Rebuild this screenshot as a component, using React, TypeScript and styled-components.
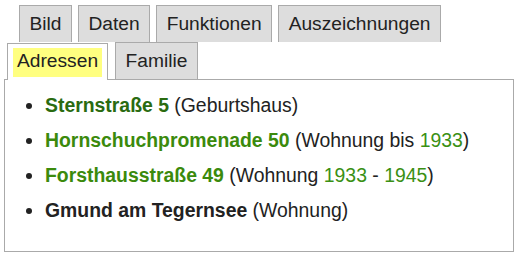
import styled, { createGlobalStyle } from "styled-components";

const GlobalStyle = createGlobalStyle`
    body {
        margin: 0;
        background: #fff;
        font-family: "Liberation Sans", Arial, sans-serif;
        color: #222;
    }
`

const Wrapper = styled.div`
    padding: 5px 4px 0;
`

const TabRow = styled.div<{ $indent: number }>`
    display: flex;
    align-items: flex-end;
    gap: 6px;
    padding-left: ${(p) => p.$indent}px;
`

const Tab = styled.div`
    background-color: #ddd;
    border: 1px solid #aaa;
    border-bottom: none;
    font-size: 19.2px;
    line-height: 34px;
    padding: 1px 9.5px 1px;
    color: #222;
    white-space: nowrap;
`

const ActiveTab = styled.div`
    position: relative;
    z-index: 1;
    background-color: #fff;
    border: 1px solid #aaa;
    border-bottom: none;
    padding: 4px 5px 3px;
    margin-bottom: -1px;
    margin-right: 1px;
`

const Highlight = styled.span`
    display: inline-block;
    background-color: #ffff80;
    font-size: 19.2px;
    line-height: 26px;
    padding: 0 4px 3px;
    color: #222;
`

const Panel = styled.div`
    border: 1px solid #aaa;
    height: 171px;
`

const AddressList = styled.ul`
    margin: 8px 0 0;
    padding-left: 40px;
    font-size: 19.4px;
    line-height: 35px;
`

const Place = styled.b<{ $tone?: "visited" | "link" | "plain" }>`
    color: ${(p) => (p.$tone === "visited" ? "#2a6b10" : p.$tone === "link" ? "#3b8a0c" : "#222")};
`

const Year = styled.span`
    color: #3a9014;
`

export default function App() {
    return (
        <Wrapper>
            <GlobalStyle />
            <TabRow $indent={15}>
                {["Bild", "Daten", "Funktionen", "Auszeichnungen"].map((t) => (
                    <Tab key={t}>{t}</Tab>
                ))}
            </TabRow>
            <TabRow $indent={3}>
                <ActiveTab>
                    <Highlight>Adressen</Highlight>
                </ActiveTab>
                <Tab>Familie</Tab>
            </TabRow>
            <Panel>
                <AddressList>
                    <li>
                        <Place $tone="visited">Sternstraße 5</Place> (Geburtshaus)
                    </li>
                    <li>
                        <Place $tone="link">Hornschuchpromenade 50</Place> (Wohnung bis <Year>1933</Year>)
                    </li>
                    <li>
                        <Place $tone="link">Forsthausstraße 49</Place> (Wohnung <Year>1933</Year> - <Year>1945</Year>)
                    </li>
                    <li>
                        <Place>Gmund am Tegernsee</Place> (Wohnung)
                    </li>
                </AddressList>
            </Panel>
        </Wrapper>
    )
}
